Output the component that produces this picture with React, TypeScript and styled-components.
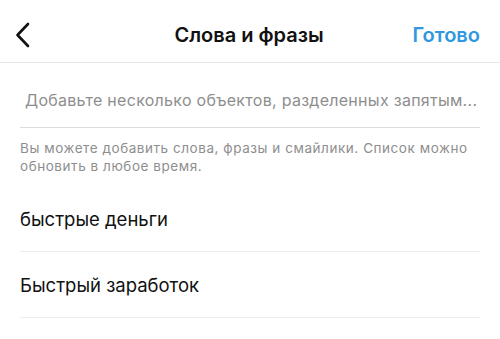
import React from "react";
import styled, { createGlobalStyle } from "styled-components";

const Global = createGlobalStyle`
  html, body { margin: 0; padding: 0; background: #fff; }
  body { font-family: Inter, "Noto Sans", Roboto, sans-serif; -webkit-font-smoothing: antialiased; }
`;

const Page = styled.div`
  width: 500px;
  height: 339px;
  background: #fff;
  overflow: hidden;
`;

const Header = styled.header`
  height: 63px;
  border-bottom: 1px solid #e6e6e6;
  display: grid;
  grid-template-columns: 80px 1fr 80px;
  align-items: center;
  padding: 7px 20px 0 14px;
  box-sizing: border-box;
`;

const BackButton = styled.button`
  border: 0;
  background: none;
  padding: 0;
  width: 20px;
  height: 26px;
  display: flex;
  align-items: center;
  cursor: pointer;
`;

const Title = styled.h1`
  margin: 0 0 0 4px;
  text-align: center;
  font-size: 20px;
  font-weight: 600;
  color: #111;
`;

const Done = styled.button`
  border: 0;
  background: none;
  padding: 0;
  justify-self: end;
  font-family: inherit;
  font-size: 20px;
  font-weight: 600;
  color: #2f98e0;
  cursor: pointer;
`;

const Body = styled.main`
  padding: 0 20px;
`;

const InputWrap = styled.div`
  height: 65px;
  border-bottom: 1px solid #dbdbdb;
  display: flex;
  align-items: center;
  padding-top: 10px;
  box-sizing: border-box;
`;

const Input = styled.input`
  border: 0;
  outline: none;
  width: 100%;
  padding: 0 0 0 5px;
  font-family: inherit;
  font-size: 16px;
  letter-spacing: 0.28px;
  color: #111;
  &::placeholder { color: #8e8e8e; }
`;

const Hint = styled.p`
  margin: 0;
  padding-top: 11px;
  font-size: 13.5px;
  letter-spacing: 0.55px;
  line-height: 18px;
  color: #8e8e8e;
`;

const List = styled.div`
  margin-top: 11px;
`;

const Row = styled.div`
  height: 66px;
  border-bottom: 1px solid #ececec;
  display: flex;
  align-items: center;
  font-size: 18.5px;
  color: #111;
  box-sizing: border-box;
`;

const words = ["быстрые деньги", "Быстрый заработок"];

export default function App() {
  return (
    <Page>
      <Global />
      <Header>
        <BackButton aria-label="Назад">
          <svg width="18" height="26" viewBox="0 0 18 26" fill="none">
            <path d="M14 2 L3.5 13 L14 24" stroke="#111" strokeWidth="2.6" strokeLinecap="round" strokeLinejoin="round" />
          </svg>
        </BackButton>
        <Title>Слова и фразы</Title>
        <Done>Готово</Done>
      </Header>
      <Body>
        <InputWrap>
          <Input placeholder="Добавьте несколько объектов, разделенных запятым..." />
        </InputWrap>
        <Hint>Вы можете добавить слова, фразы и смайлики. Список можно обновить в любое время.</Hint>
        <List>
          {words.map((w) => (
            <Row key={w}>{w}</Row>
          ))}
        </List>
      </Body>
    </Page>
  );
}
